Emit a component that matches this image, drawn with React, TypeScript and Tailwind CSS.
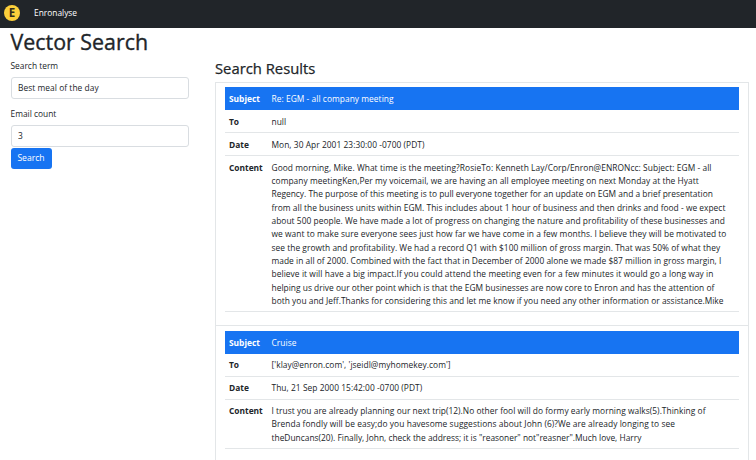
import type { ReactNode } from "react";

type Line = { text: string; spacing: string };
type Email = { subject: string; to: string; date: string; content: Line[] };

const emails: Email[] = [
  {
    subject: "Re: EGM - all company meeting",
    to: "null",
    date: "Mon, 30 Apr 2001 23:30:00 -0700 (PDT)",
    content: [
      { text: "Good morning, Mike. What time is the meeting?RosieTo: Kenneth Lay/Corp/Enron@ENRONcc: Subject: EGM - all", spacing: "tracking-[0.066px]" },
      { text: "company meetingKen,Per my voicemail, we are having an all employee meeting on next Monday at the Hyatt", spacing: "tracking-[0.042px]" },
      { text: "Regency. The purpose of this meeting is to pull everyone together for an update on EGM and a brief presentation", spacing: "tracking-[0.01px]" },
      { text: "from all the business units within EGM. This includes about 1 hour of business and then drinks and food - we expect", spacing: "tracking-[0.026px]" },
      { text: "about 500 people. We have made a lot of progress on changing the nature and profitability of these businesses and", spacing: "tracking-[0.038px]" },
      { text: "we want to make sure everyone sees just how far we have come in a few months. I believe they will be motivated to", spacing: "tracking-[0.05px]" },
      { text: "see the growth and profitability. We had a record Q1 with $100 million of gross margin. That was 50% of what they", spacing: "tracking-[0.036px]" },
      { text: "made in all of 2000. Combined with the fact that in December of 2000 alone we made $87 million in gross margin, I", spacing: "tracking-[0.03px]" },
      { text: "believe it will have a big impact.If you could attend the meeting even for a few minutes it would go a long way in", spacing: "tracking-[0.07px]" },
      { text: "helping us drive our other point which is that the EGM businesses are now core to Enron and has the attention of", spacing: "tracking-[0.022px]" },
      { text: "both you and Jeff.Thanks for considering this and let me know if you need any other information or assistance.Mike", spacing: "tracking-[0.03px]" },
    ],
  },
  {
    subject: "Cruise",
    to: "['klay@enron.com', 'jseidl@myhomekey.com']",
    date: "Thu, 21 Sep 2000 15:42:00 -0700 (PDT)",
    content: [
      { text: "I trust you are already planning our next trip(12).No other fool will do formy early morning walks(5).Thinking of", spacing: "tracking-[0.038px]" },
      { text: "Brenda fondly will be easy;do you havesome suggestions about John (6)?We are already longing to see", spacing: "tracking-[0.068px]" },
      { text: "theDuncans(20). Finally, John, check the address; it is \"reasoner\" not\"reasner\".Much love, Harry", spacing: "tracking-[0.005px]" },
    ],
  },
];

function Row({ label, children, header = false }: { label: string; children: ReactNode; header?: boolean }) {
  return (
    <div
      className={
        header
          ? "flex border-b border-[#1774f2] bg-[#1774f2] pt-[5px] pb-[4px] text-white"
          : "flex border-b border-[#e3e6e8] pt-[4.5px] pb-[4px]"
      }
    >
      <div className="w-[46.5px] shrink-0 pl-[4px] font-bold">{label}</div>
      <div className="whitespace-nowrap tracking-[0.05px]">{children}</div>
    </div>
  );
}

function Field({ label, value }: { label: string; value: string }) {
  return (
    <label className="block">
      <span className="block h-[18px]">{label}</span>
      <input
        className="block h-[22px] w-[178px] rounded-[3px] border border-[#d9dde1] bg-white px-[6.5px] tracking-[0.05px] outline-none"
        defaultValue={value}
      />
    </label>
  );
}

export default function App() {
  return (
    <div className="h-[460px] overflow-hidden bg-white font-['Open_Sans',sans-serif] text-[8.4px] leading-[13.35px] text-[#212529]">
      <nav className="flex h-[27.5px] items-center bg-[#212529] pb-[2px] pl-[4px] text-white">
        <div className="flex size-[16px] items-center justify-center rounded-full bg-[#fbcf3b] text-[11.5px] font-bold text-[#30291b]">E</div>
        <span className="ml-[14px]">Enronalyse</span>
      </nav>
      <h1 className="ml-[10.5px] h-[31px] text-[21.4px] leading-[28px] [-webkit-text-stroke:0.35px_#212529]">Vector Search</h1>
      <div className="flex">
        <div className="ml-[10.5px] w-[204.5px] shrink-0">
          <div className="flex flex-col gap-[8px]">
            <Field label="Search term" value="Best meal of the day" />
            <Field label="Email count" value="3" />
          </div>
          <button className="mt-[1.5px] block h-[21px] w-[41px] rounded-[3px] bg-[#1774f2] text-[8.6px] text-white">Search</button>
        </div>
        <div className="w-[533.5px]">
          <h2 className="h-[23.5px] text-[14.8px] leading-[18.5px] [-webkit-text-stroke:0.25px_#212529]">Search Results</h2>
          <div className="border border-[#e3e6e8]">
            {emails.map((email, i) => (
              <div key={email.subject} className={i ? "h-[240px] px-[9px] pt-[4.5px]" : "h-[243px] border-b border-[#e3e6e8] px-[9px] pt-[4px]"}>
                <Row label="Subject" header>{email.subject}</Row>
                <Row label="To">{email.to}</Row>
                <Row label="Date">{email.date}</Row>
                <Row label="Content">
                  {email.content.map((line) => (
                    <div key={line.text} className={line.spacing}>{line.text}</div>
                  ))}
                </Row>
              </div>
            ))}
          </div>
        </div>
      </div>
    </div>
  );
}
